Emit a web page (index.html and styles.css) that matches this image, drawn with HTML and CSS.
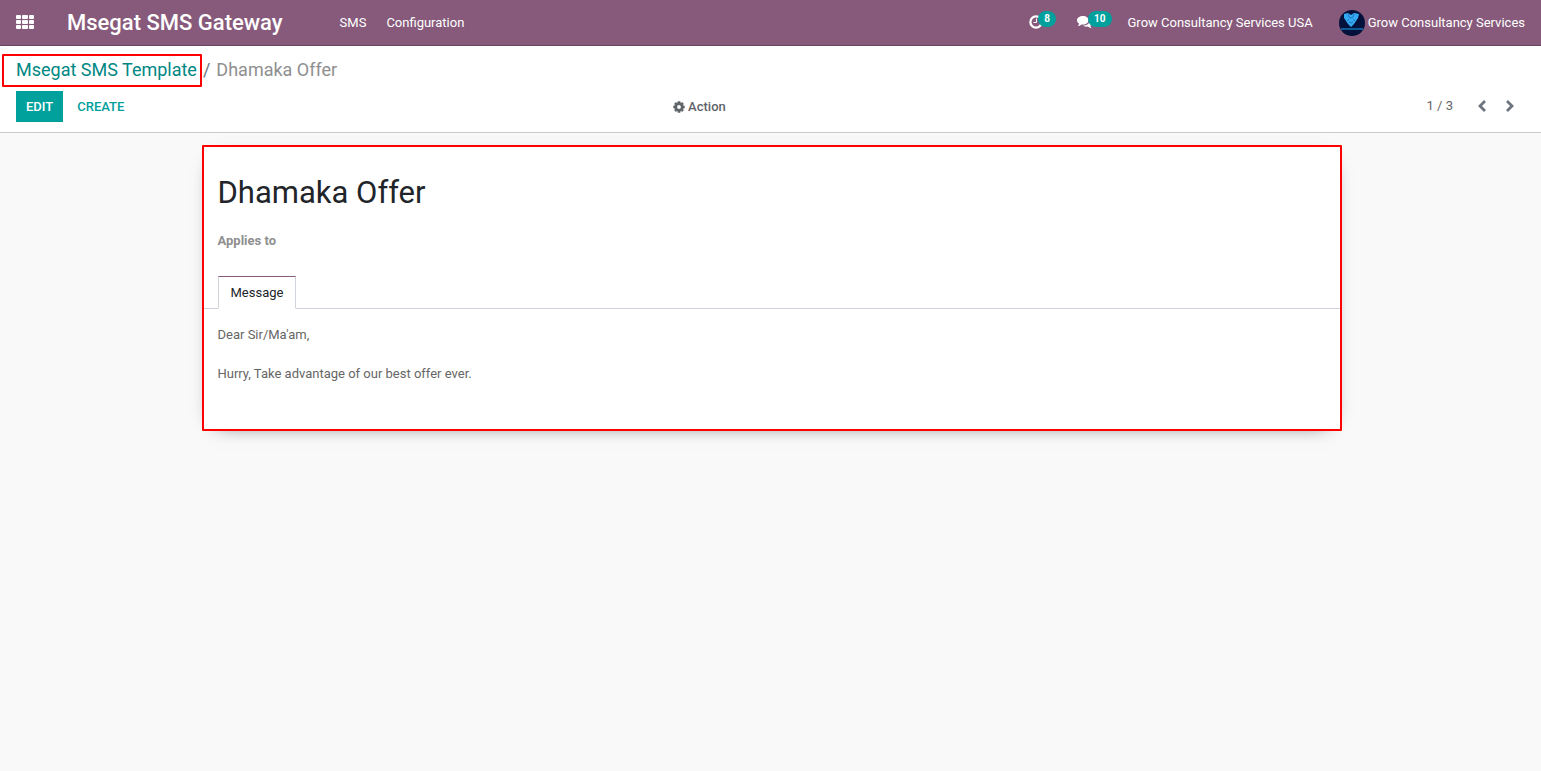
FILE: index.html
```html
<!DOCTYPE html>
<html lang="en">
<head>
<meta charset="utf-8">
<title>Dhamaka Offer - Msegat SMS Gateway</title>
<link rel="stylesheet" href="styles.css">
</head>
<body>
<header class="navbar">
  <button class="nav-apps" aria-label="Applications">
    <svg width="18" height="15" viewBox="0 0 18 15" fill="currentColor" aria-hidden="true">
      <rect x="0" y="0" width="5" height="4" rx="1"/><rect x="6" y="0" width="6" height="4" rx="1"/><rect x="13" y="0" width="5" height="4" rx="1"/>
      <rect x="0" y="5" width="5" height="4" rx="1"/><rect x="6" y="5" width="6" height="4" rx="1"/><rect x="13" y="5" width="5" height="4" rx="1"/>
      <rect x="0" y="10" width="5" height="4" rx="1"/><rect x="6" y="10" width="6" height="4" rx="1"/><rect x="13" y="10" width="5" height="4" rx="1"/>
    </svg>
  </button>
  <a class="brand" href="#">Msegat SMS Gateway</a>
  <nav class="menu">
    <a href="#">SMS</a>
    <a href="#">Configuration</a>
  </nav>
  <div class="systray">
    <button class="tray" aria-label="Activities">
      <svg width="14" height="14" viewBox="0 0 14 14" fill="none" stroke="currentColor" aria-hidden="true"><circle cx="7" cy="7" r="5.600" stroke-width="2.300"/><path d="M7.500 3.500V7.500H4.500" stroke-width="1"/></svg>
      <span class="badge">8</span>
    </button>
    <button class="tray" aria-label="Conversations">
      <svg width="16" height="14" viewBox="0 0 16 14" fill="currentColor" aria-hidden="true"><path d="M6 1C9.200 1 11.500 2.800 11.500 5.200S9.200 9.500 6 9.500L4.700 9.400C3.600 10.300 2.300 10.900.9 11C1.600 10.300 2 9.600 2.100 8.600C.8 7.800 0 6.600 0 5.200C0 2.800 2.800 1 6 1Z"/><path d="M12.600 4C14.100 4.600 15.200 5.900 15.200 7.500C15.200 8.800 14.500 10 13.300 10.800C13.400 11.700 13.900 12.400 14.600 13.200C13.100 13.100 11.800 12.500 10.700 11.600C8.900 11.900 7 11.600 5.600 10.600C9.800 10.600 12.800 8.500 12.800 5.400Z"/></svg>
      <span class="badge">10</span>
    </button>
    <button class="company">Grow Consultancy Services USA</button>
    <button class="user">
      <svg width="26" height="26" viewBox="0 0 26 26" aria-hidden="true">
        <circle cx="13" cy="13" r="13" fill="#04113a"/>
        <path d="M5 4L9 3L12 5L15 3L20 4L19 8L17 11L15 14L12 17L9 14L7 11L5 8Z" fill="#35a9f4"/>
        <path d="M9 4L10 7L12 8L14 7L15 4M8 11L10 9M16 11L14 9M10 12L12 13L14 12" fill="none" stroke="#1b78b8" stroke-width="1"/>
        <path d="M2 19H24" stroke="#0d5b94" stroke-width="2"/>
      </svg>
      <span>Grow Consultancy Services</span>
    </button>
  </div>
</header>

<section class="control-panel">
  <nav class="breadcrumb" aria-label="Breadcrumb">
    <a class="crumb-link" href="#">Msegat SMS Template</a>
    <span class="separator">/</span>
    <span class="current">Dhamaka Offer</span>
  </nav>
  <div class="toolbar">
    <div class="buttons">
      <button class="btn primary">EDIT</button>
      <button class="btn link">CREATE</button>
    </div>
    <div class="side">
      <button class="action">
        <svg width="12" height="12" viewBox="0 0 12 12" aria-hidden="true"><circle cx="6" cy="6" r="3.300" fill="none" stroke="currentColor" stroke-width="2.800"/><path d="M6 0.300V2M6 10V11.700M0.300 6H2M10 6H11.700M2 2L3 3M9 9L10 10M10 2L9 3M3 9L2 10" stroke="currentColor" stroke-width="2.600"/></svg>
        <span>Action</span>
      </button>
      <div class="pager">
        <span>1 / 3</span>
        <div class="arrows">
          <button aria-label="Previous"><svg width="10" height="14" viewBox="0 0 10 14" fill="none" stroke="currentColor" stroke-width="2.800" aria-hidden="true"><path d="M8 2L3 7L8 12"/></svg></button>
          <button aria-label="Next"><svg width="10" height="14" viewBox="0 0 10 14" fill="none" stroke="currentColor" stroke-width="2.800" aria-hidden="true"><path d="M2 2L7 7L2 12"/></svg></button>
        </div>
      </div>
    </div>
  </div>
</section>

<main class="content">
  <article class="sheet">
    <h1>Dhamaka Offer</h1>
    <div class="field-label">Applies to</div>
    <div class="tabs" role="tablist">
      <button class="tab" role="tab" aria-selected="true">Message</button>
    </div>
    <div class="message" role="tabpanel">Dear Sir/Ma'am,<br><br>Hurry, Take advantage of our best offer ever.</div>
  </article>
</main>
</body>
</html>
```
FILE: styles.css
```css
* {
  box-sizing: border-box;
}

body {
  margin: 0;
  min-height: 100vh;
  background: #f9f9f9;
  color: #666;
  font: 13px/20px Roboto, "Liberation Sans", sans-serif;
}

button {
  padding: 0;
  border: 0;
  background: none;
  color: inherit;
  font: inherit;
  cursor: pointer;
}

a {
  color: inherit;
  text-decoration: none;
}

svg {
  display: block;
  flex: none;
}

.navbar {
  display: flex;
  align-items: center;
  height: 46px;
  padding: 0 16px;
  border-bottom: 1px solid #68465f;
  background: #875a7b;
  color: #fff;
  white-space: nowrap;
}

.brand {
  margin-left: 33px;
  font-size: 22px;
  font-weight: 500;
}

.menu {
  display: flex;
  gap: 20px;
  margin-left: 57px;
}

.systray {
  display: flex;
  align-items: center;
  margin-left: auto;
}

.tray {
  display: flex;
  align-items: center;
  margin-right: 21px;
  padding-bottom: 2px;
}

.tray + .company {
  margin-left: -5px;
}

.badge {
  margin: -6px 0 0 -5px;
  padding: 0 6px;
  border-radius: 8px;
  background: #00a09d;
  font-size: 10px;
  font-weight: 700;
  line-height: 16px;
}

.user {
  display: flex;
  align-items: center;
  gap: 3px;
  margin-left: 26px;
}

.control-panel {
  padding: 8px 16px 10px 2px;
  border-bottom: 1px solid #ccc;
  background: #fff;
}

.breadcrumb {
  display: flex;
  align-items: baseline;
  color: #8f8f8f;
  font-size: 18px;
}

.crumb-link {
  padding: 4px 3px 5px 12px;
  border: 2px solid #f00;
  border-radius: 1px;
  color: #008784;
}

.separator {
  margin: 0 6px 0 1px;
  color: #6c757d;
}

.toolbar {
  display: grid;
  grid-template-columns: 10fr 13fr;
  align-items: center;
  margin-top: 4px;
  padding-left: 14px;
}

.buttons {
  display: flex;
  gap: 4px;
}

.btn {
  height: 31px;
  padding: 0 10px;
  font-weight: 500;
}

.primary {
  background: #00a09d;
  color: #fff;
}

.link {
  color: #00a09d;
}

.side {
  display: flex;
  align-items: center;
  justify-content: space-between;
  padding-left: 1px;
}

.action {
  display: flex;
  align-items: center;
  gap: 3px;
  color: #5f6469;
  font-weight: 500;
}

.pager {
  display: flex;
  align-items: center;
  gap: 24px;
  padding: 0 10px 2px 0;
}

.arrows {
  display: flex;
  gap: 18px;
  color: #6c757d;
}

.content {
  padding: 12px 0 12px 2px;
}

.sheet {
  max-width: 1140px;
  margin: 0 auto;
  padding-bottom: 45px;
  border: 2px solid #f00;
  border-radius: 1px;
  background: #fff;
  box-shadow: 0 5px 20px -15px #000;
}

h1 {
  margin: 0;
  padding: 27px 14px 0;
  color: #212529;
  font-size: 31px;
  font-weight: 400;
  line-height: 38px;
}

.field-label {
  padding: 19px 14px 0;
  color: #8f8f8f;
  font-weight: 700;
}

.tabs {
  display: flex;
  margin-top: 25px;
  padding: 0 14px;
  border-bottom: 1px solid #ced4da;
}

.tab {
  height: 33px;
  margin-bottom: -1px;
  padding: 0 12px;
  border: 1px solid #ced4da;
  border-top-color: #875a7b;
  border-bottom-color: #fff;
  background: #fff;
  color: #212529;
}

.message {
  padding: 16px 14px 0;
  line-height: 1.5;
}
```
